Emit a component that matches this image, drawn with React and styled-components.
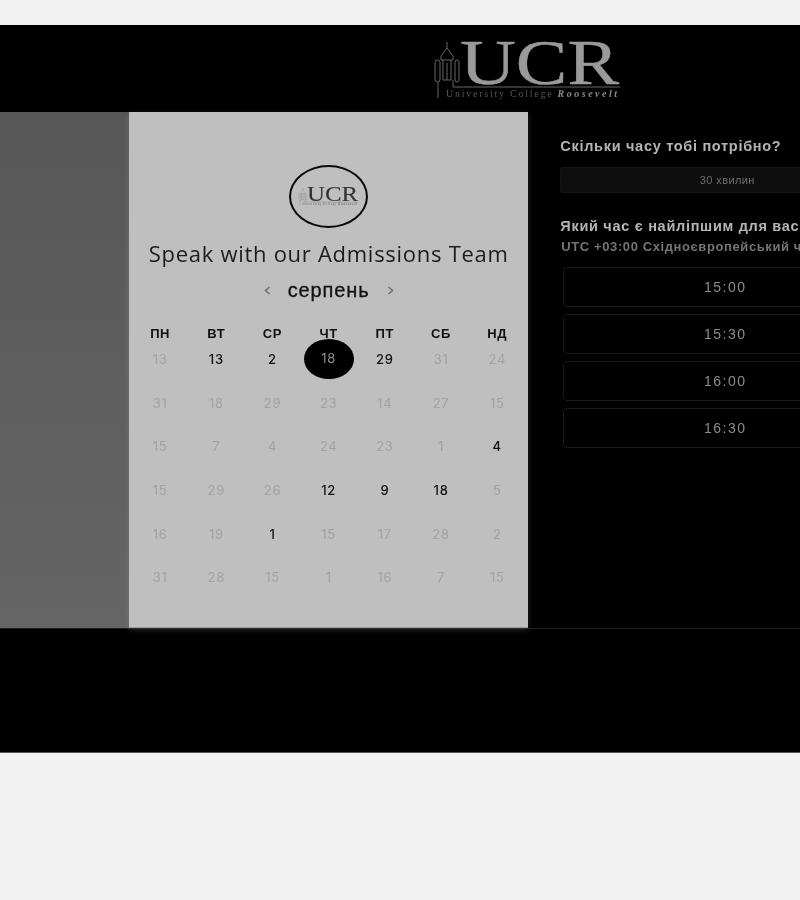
import React from "react";
import styled, { createGlobalStyle } from "styled-components";

const GlobalStyle = createGlobalStyle`
  html, body {
    margin: 0;
    padding: 0;
    background: #f2f2f2;
    font-family: "Liberation Sans", Arial, sans-serif;
    overflow: hidden;
  }
`;

const Stage = styled.div`
  margin-top: 25px;
  height: 728px;
  width: 800px;
  background: #000;
  overflow: hidden;
  border-bottom: 1px solid #555;
  box-sizing: border-box;
  filter: grayscale(1) blur(0.4px);
`;

const Header = styled.header`
  height: 87px;
  padding: 12px 0 0 432px;
  box-sizing: border-box;
`;

const Main = styled.main`
  display: flex;
  height: 516px;
  border-bottom: 1px solid #1c1c1c;
`;

const Side = styled.div`
  flex: 0 0 129px;
  background: linear-gradient(180deg, #575757 0%, #656565 100%);
`;

const Card = styled.section`
  flex: 0 0 398px;
  box-sizing: border-box;
  padding: 53px 3px 0;
  background: #bfbfbf;
  box-shadow: 0 2px 6px rgba(255, 255, 255, 0.14);
  border-bottom: 1px solid #999;
  display: flex;
  flex-direction: column;
  align-items: center;
`;

const Badge = styled.div`
  width: 79px;
  height: 63px;
  box-sizing: border-box;
  border: 2.5px solid #0a0a0a;
  border-radius: 50%;
  display: flex;
  align-items: center;
  justify-content: center;
`;

const Title = styled.h1`
  margin: 11px 0 0;
  font-family: "Open Sans", "Liberation Sans", sans-serif;
  font-size: 22px;
  line-height: 28px;
  font-weight: 400;
  letter-spacing: 0.72px;
  color: #1c1c1c;
  white-space: nowrap;
`;

const MonthRow = styled.div`
  display: flex;
  align-items: center;
  gap: 16px;
  margin-top: 9px;
  height: 28px;
`;

const MonthName = styled.span`
  font-size: 20px;
  font-weight: 500;
  letter-spacing: 0.9px;
  color: #111;
  -webkit-text-stroke: 0.3px #111;
`;

const Arrow = styled.svg`
  width: 9px;
  height: 11px;
  fill: none;
  stroke: #707070;
  stroke-width: 1.6;
`;

const Calendar = styled.div`
  display: grid;
  grid-template-columns: repeat(7, 56.2px);
  margin-top: 19px;
`;

const WeekDay = styled.div`
  height: 21px;
  margin-bottom: -7px;
  display: flex;
  align-items: center;
  justify-content: center;
  font-size: 13px;
  font-weight: 700;
  letter-spacing: 0.6px;
  color: #111;
`;

const Day = styled.div`
  height: 43.7px;
  display: flex;
  align-items: center;
  justify-content: center;
  font-family: Inter, "Liberation Sans", sans-serif;
  font-size: 13px;
  letter-spacing: 0.7px;
  color: ${(p) => (p.$open ? "#111" : "#a2a2a2")};
  font-weight: ${(p) => (p.$open ? 500 : 400)};
`;

const Selected = styled.span`
  width: 50px;
  height: 40px;
  padding-bottom: 2px;
  box-sizing: border-box;
  border-radius: 50%;
  background: #000;
  color: #8f8f8f;
  display: flex;
  align-items: center;
  justify-content: center;
`;

const Panel = styled.section`
  flex: 0 0 400px;
  box-sizing: border-box;
  padding: 25px 0 0 32px;
`;

const Question = styled.h2`
  margin: 0;
  font-size: 14.5px;
  line-height: 18px;
  font-weight: 700;
  letter-spacing: 0.7px;
  color: #b4b4b4;
  white-space: nowrap;
`;

const Duration = styled.div`
  width: 334px;
  height: 26px;
  margin: 12px 0 24px;
  box-sizing: border-box;
  background: #0e0e0e;
  border: 1px solid #151515;
  border-radius: 3px;
  display: flex;
  align-items: center;
  justify-content: center;
  font-size: 11px;
  letter-spacing: 0.4px;
  color: #6e6e6e;
`;

const Zone = styled.p`
  margin: 4px 0 12px 1px;
  font-size: 13px;
  line-height: 16px;
  font-weight: 700;
  letter-spacing: 0.6px;
  color: #747474;
  white-space: nowrap;
`;

const Slots = styled.div`
  display: flex;
  flex-direction: column;
  gap: 7px;
  margin-left: 3px;
`;

const Slot = styled.div`
  width: 324px;
  height: 40px;
  box-sizing: border-box;
  border: 1px solid #191919;
  border-radius: 4px;
  display: flex;
  align-items: center;
  justify-content: center;
  font-size: 14px;
  letter-spacing: 1.5px;
  color: #8c8c8c;
`;

const weekDays = ["ПН", "ВТ", "СР", "ЧТ", "ПТ", "СБ", "НД"];

const days = [
  [13, 0], [13, 1], [2, 1], [18, 2], [29, 1], [31, 0], [24, 0],
  [31, 0], [18, 0], [29, 0], [23, 0], [14, 0], [27, 0], [15, 0],
  [15, 0], [7, 0], [4, 0], [24, 0], [23, 0], [1, 0], [4, 1],
  [15, 0], [29, 0], [26, 0], [12, 1], [9, 1], [18, 1], [5, 0],
  [16, 0], [19, 0], [1, 1], [15, 0], [17, 0], [28, 0], [2, 0],
  [31, 0], [28, 0], [15, 0], [1, 0], [16, 0], [7, 0], [15, 0],
];

const times = ["15:00", "15:30", "16:00", "16:30"];

// the college logo, same drawing in the header and in the round badge
function Logo({ width, color, tower, sub, accent }) {
  return (
    <svg width={width} viewBox="0 0 190 65" style={{ display: "block" }}>
      <g fill="none" stroke={tower} strokeWidth="1">
        <path d="M15 5v6M15 11l-6 8v4M15 11l6 8v4M9 23h12" />
        <path d="M11 23v20M19 23v20M15 26v17M11 43h8" />
        <rect x="3" y="23" width="5" height="22" rx="2.5" />
        <rect x="23" y="23" width="4" height="22" rx="2" />
        <path d="M6 45v16M21 43v7H188" />
      </g>
      <text
        x="28"
        y="46.5"
        fontFamily="Liberation Serif"
        fontSize="63"
        textLength="159"
        lengthAdjust="spacingAndGlyphs"
        fill={color}
        stroke={color}
        strokeWidth="0.4"
      >
        UCR
      </text>
      <text
        x="14"
        y="60"
        fontFamily="Liberation Serif"
        fontSize="10"
        letterSpacing="1.75"
        fill={sub}
      >
        University College{" "}
        <tspan fontStyle="italic" fontWeight="700" letterSpacing="2.5" fill={accent}>
          Roosevelt
        </tspan>
      </text>
    </svg>
  );
}

export default function App() {
  return (
    <>
      <GlobalStyle />
      <Stage>
        <Header>
          <Logo width={190} color="#9a9a9a" tower="#666" sub="#555" accent="#8a8a8a" />
        </Header>
        <Main>
          <Side />
          <Card>
            <Badge>
              <Logo width={61} color="#333" tower="#777" sub="#666" accent="#666" />
            </Badge>
            <Title>Speak with our Admissions Team</Title>
            <MonthRow>
              <Arrow viewBox="0 0 9 11">
                <path d="M6.5 2 2.5 5.5l4 3.5" />
              </Arrow>
              <MonthName>серпень</MonthName>
              <Arrow viewBox="0 0 9 11">
                <path d="M2.5 2l4 3.5-4 3.5" />
              </Arrow>
            </MonthRow>
            <Calendar>
              {weekDays.map((d) => (
                <WeekDay key={d}>{d}</WeekDay>
              ))}
              {days.map(([n, state], i) => (
                <Day key={i} $open={state === 1}>
                  {state === 2 ? <Selected>{n}</Selected> : n}
                </Day>
              ))}
            </Calendar>
          </Card>
          <Panel>
            <Question>Скільки часу тобі потрібно?</Question>
            <Duration>30 хвилин</Duration>
            <Question>Який час є найліпшим для вас?</Question>
            <Zone>UTC +03:00 Східноєвропейський час</Zone>
            <Slots>
              {times.map((t) => (
                <Slot key={t}>{t}</Slot>
              ))}
            </Slots>
          </Panel>
        </Main>
      </Stage>
    </>
  );
}
